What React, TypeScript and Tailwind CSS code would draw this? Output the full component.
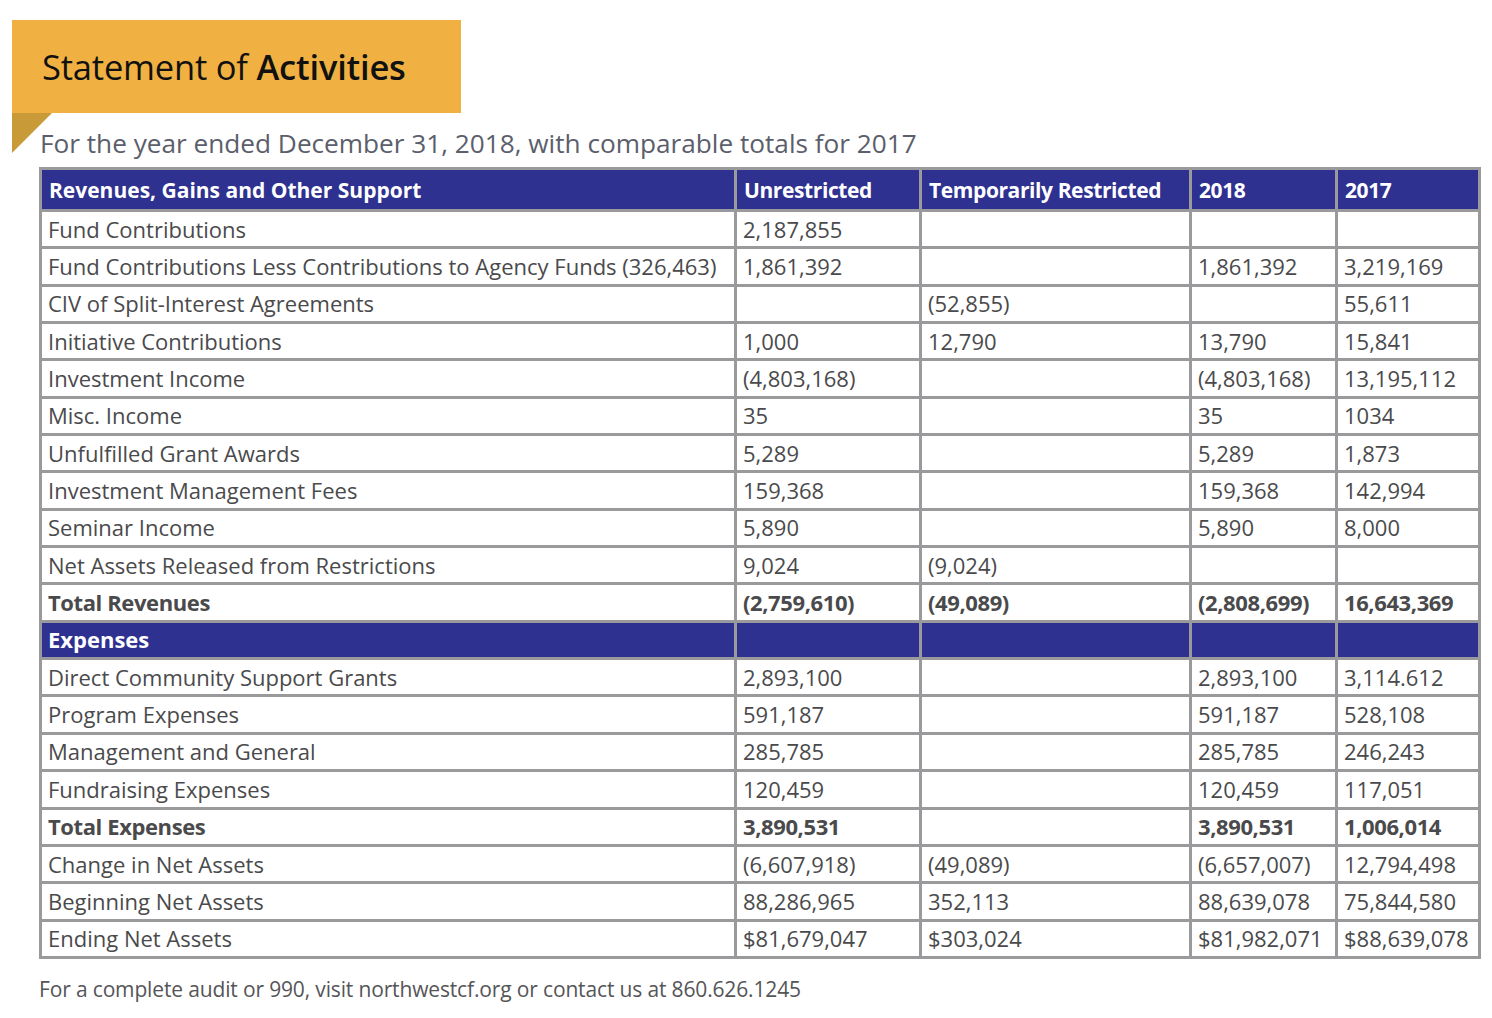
import React from "react";

type Row = { cells: string[]; kind?: "body" | "total" | "section" };

const rows: Row[] = [
  { cells: ["Fund Contributions", "2,187,855", "", "", ""] },
  { cells: ["Fund Contributions Less Contributions to Agency Funds (326,463)", "1,861,392", "", "1,861,392", "3,219,169"] },
  { cells: ["CIV of Split-Interest Agreements", "", "(52,855)", "", "55,611"] },
  { cells: ["Initiative Contributions", "1,000", "12,790", "13,790", "15,841"] },
  { cells: ["Investment Income", "(4,803,168)", "", "(4,803,168)", "13,195,112"] },
  { cells: ["Misc. Income", "35", "", "35", "1034"] },
  { cells: ["Unfulfilled Grant Awards", "5,289", "", "5,289", "1,873"] },
  { cells: ["Investment Management Fees", "159,368", "", "159,368", "142,994"] },
  { cells: ["Seminar Income", "5,890", "", "5,890", "8,000"] },
  { cells: ["Net Assets Released from Restrictions", "9,024", "(9,024)", "", ""] },
  { cells: ["Total Revenues", "(2,759,610)", "(49,089)", "(2,808,699)", "16,643,369"], kind: "total" },
  { cells: ["Expenses", "", "", "", ""], kind: "section" },
  { cells: ["Direct Community Support Grants", "2,893,100", "", "2,893,100", "3,114.612"] },
  { cells: ["Program Expenses", "591,187", "", "591,187", "528,108"] },
  { cells: ["Management and General", "285,785", "", "285,785", "246,243"] },
  { cells: ["Fundraising Expenses", "120,459", "", "120,459", "117,051"] },
  { cells: ["Total Expenses", "3,890,531", "", "3,890,531", "1,006,014"], kind: "total" },
  { cells: ["Change in Net Assets", "(6,607,918)", "(49,089)", "(6,657,007)", "12,794,498"] },
  { cells: ["Beginning Net Assets", "88,286,965", "352,113", "88,639,078", "75,844,580"] },
  { cells: ["Ending Net Assets", "$81,679,047", "$303,024", "$81,982,071", "$88,639,078"] },
];

const headers = ["Revenues, Gains and Other Support", "Unrestricted", "Temporarily Restricted", "2018", "2017"];

export default function App() {
  return (
    <div
      className="w-[1492px] h-[1018px] bg-white relative overflow-hidden"
      style={{ fontFamily: '"Open Sans", "Noto Sans", sans-serif' }}
    >
      <div className="pt-[20px] pl-[12px]">
        <div className="w-[449px] h-[93px] bg-[#f0b142] flex items-center pl-[30px]">
          <span className="text-[34.5px] text-[#111] tracking-[-0.2px]">
            Statement of <span className="font-semibold">Activities</span>
          </span>
        </div>
        <div className="flex">
          <svg width="40" height="40" viewBox="0 0 40 40" className="block shrink-0">
            <polygon points="0,0 40,0 0,40" fill="#c99a38" />
          </svg>
          <div className="-ml-[12px] mt-[12px] text-[26.2px] leading-[36px] text-[#5b5e6b]">
            For the year ended December 31, 2018, with comparable totals for 2017
          </div>
        </div>
      </div>

      <div className="ml-[39px] mt-[6px] w-[1442px] bg-[#9a9a9c] p-[3px] grid grid-cols-[692px_182px_267px_143px_140px] grid-rows-[39px_repeat(20,34.35px)] gap-[3px]">
        {headers.map((h, i) => (
          <div
            key={h}
            className={`bg-[#2e3190] text-white font-bold text-[21px] flex items-center pl-[7px] pt-[3px] whitespace-nowrap ${
              i === 0 ? "" : "tracking-[-0.4px]"
            }`}
          >
            {h}
          </div>
        ))}
        {rows.map((r, ri) =>
          r.cells.map((c, ci) => {
            const section = r.kind === "section";
            const total = r.kind === "total";
            return (
              <div
                key={`${ri}-${ci}`}
                className={`flex items-center pl-[6px] whitespace-nowrap text-[22px] ${
                  section
                    ? "bg-[#2e3190] text-white font-bold"
                    : total
                    ? "bg-white text-[#4a4a4c] font-bold tracking-[-0.4px]"
                    : "bg-white text-[#4a4a4c]"
                }`}
              >
                {c}
              </div>
            );
          })
        )}
      </div>

      <div className="ml-[39px] mt-[15px] text-[21px] text-[#555558] tracking-[-0.15px]">
        For a complete audit or 990, visit northwestcf.org or contact us at 860.626.1245
      </div>
    </div>
  );
}
